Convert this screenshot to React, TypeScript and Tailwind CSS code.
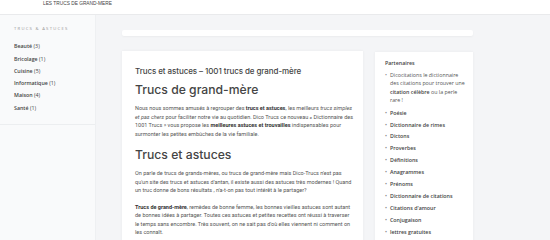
import React from "react";

const categories = [
  ["Beauté", 3],
  ["Bricolage", 1],
  ["Cuisine", 5],
  ["Informatique", 1],
  ["Maison", 4],
  ["Santé", 1],
];

const partners = [
  "Poésie",
  "Dictionnaire de rimes",
  "Dictons",
  "Proverbes",
  "Définitions",
  "Anagrammes",
  "Prénoms",
  "Dictionnaire de citations",
  "Citations d'amour",
  "Conjugaison",
  "lettres gratuites",
];

export default function App() {
  return (
    <div className="w-[550px] h-[240px] overflow-hidden bg-[#f4f5f7] font-['Open_Sans',sans-serif] text-[#555]">
      <header className="h-[15px] bg-white border-b border-[#e9eaec] pl-[43px] flex items-start pt-[1px]">
        <span className="whitespace-nowrap text-[4.8px] leading-[6px] text-[#444] font-['Liberation_Sans',sans-serif]">
          LES TRUCS DE GRAND-MERE
        </span>
      </header>

      <div className="flex h-full">
        <aside className="w-[96px] shrink-0 bg-[#f9fafb] border-r border-[#eef0f2]">
          <div className="pl-[14px] pt-[11px] pb-[8px] border-b border-[#eceef0]">
            <div className="text-[4.2px] tracking-[0.3em] text-[#999] uppercase whitespace-nowrap">
              Trucs &amp; astuces
            </div>
            <ul className="mt-[10px]">
              {categories.map(([name, n]) => (
                <li
                  key={name}
                  className="h-[12.3px] text-[5.3px] leading-[8px] font-semibold text-[#444] whitespace-nowrap"
                >
                  {name} <span className="font-normal">({n})</span>
                </li>
              ))}
            </ul>
          </div>
        </aside>

        <main className="flex-1 pl-[26px] pt-[15px]">
          <div className="w-[351px] h-[6px] bg-white rounded-[2px] shadow-[0_1px_2px_rgba(0,0,0,0.04)]"></div>

          <div className="flex gap-[12px] mt-[15px] items-start">
            <article className="w-[241px] h-[200px] bg-white shadow-[0_0_3px_rgba(0,0,0,0.05)] pl-[13px] pr-[10px] pt-[14px] font-['Roboto',sans-serif] text-[#555]">
              <h2 className="text-[8px] leading-[12px] font-medium text-[#444] font-['Inter',sans-serif] tracking-[-0.01em]">
                Trucs et astuces – 1001 trucs de grand-mère
              </h2>
              <h1 className="mt-[4px] text-[12.2px] leading-[18px] font-medium text-[#444] font-['Inter',sans-serif]">
                Trucs de grand-mère
              </h1>
              <p className="mt-[5px] text-[5.5px] leading-[8.6px]">
                Nous nous sommes amusés à regrouper des <b className="font-bold text-[#333]">trucs et astuces</b>, les meilleurs <i>trucs simples et pas chers</i> pour faciliter notre vie au quotidien. Dico Trucs ce nouveau « Dictionnaire des 1001 Trucs » vous propose les <b className="font-bold text-[#333]">meilleures astuces et trouvailles</b> indispensables pour surmonter les petites embûches de la vie familiale.
              </p>
              <h1 className="mt-[8px] text-[12.2px] leading-[18px] font-medium text-[#444] font-['Inter',sans-serif]">
                Trucs et astuces
              </h1>
              <p className="mt-[5px] text-[5.5px] leading-[8.4px]">
                On parle de trucs de grands-mères, ou trucs de grand-mère mais Dico-Trucs n'est pas qu'un site des trucs et astuces d'antan, il existe aussi des astuces très modernes ! Quand un truc donne de bons résultats , n'a-t-on pas tout intérêt à le partager?
              </p>
              <p className="mt-[8px] text-[5.5px] leading-[8.6px]">
                <b className="font-bold text-[#333]">Trucs de grand-mère</b>, remèdes de bonne femme, les bonnes vieilles astuces sont autant de bonnes idées à partager. Toutes ces astuces et petites recettes ont réussi à traverser le temps sans encombre. Très souvent, on ne sait pas d'où elles viennent ni comment on les connaît.
              </p>
            </article>

            <aside className="w-[98px] h-[200px] mt-[1px] bg-white shadow-[0_0_3px_rgba(0,0,0,0.05)] pl-[10px] pr-[6px] pt-[8px]">
              <div className="text-[5.3px] font-semibold text-[#444]">Partenaires</div>
              <ul className="mt-[3px] text-[5.3px] text-[#444]">
                <li className="flex gap-[3px] leading-[8.3px] mb-[4.5px]">
                  <span className="text-[#888]">•</span>
                  <span className="font-normal text-[#555]">
                    Dicocitations le dictionnaire des citations pour trouver une{" "}
                    <b className="font-semibold text-[#444]">citation célèbre</b> ou la perle rare !
                  </span>
                </li>
                {partners.map((p) => (
                  <li key={p} className="flex gap-[3px] h-[11.9px] leading-[8px] font-semibold whitespace-nowrap">
                    <span className="text-[#888]">•</span>
                    <span>{p}</span>
                  </li>
                ))}
              </ul>
            </aside>
          </div>
        </main>
      </div>
    </div>
  );
}
